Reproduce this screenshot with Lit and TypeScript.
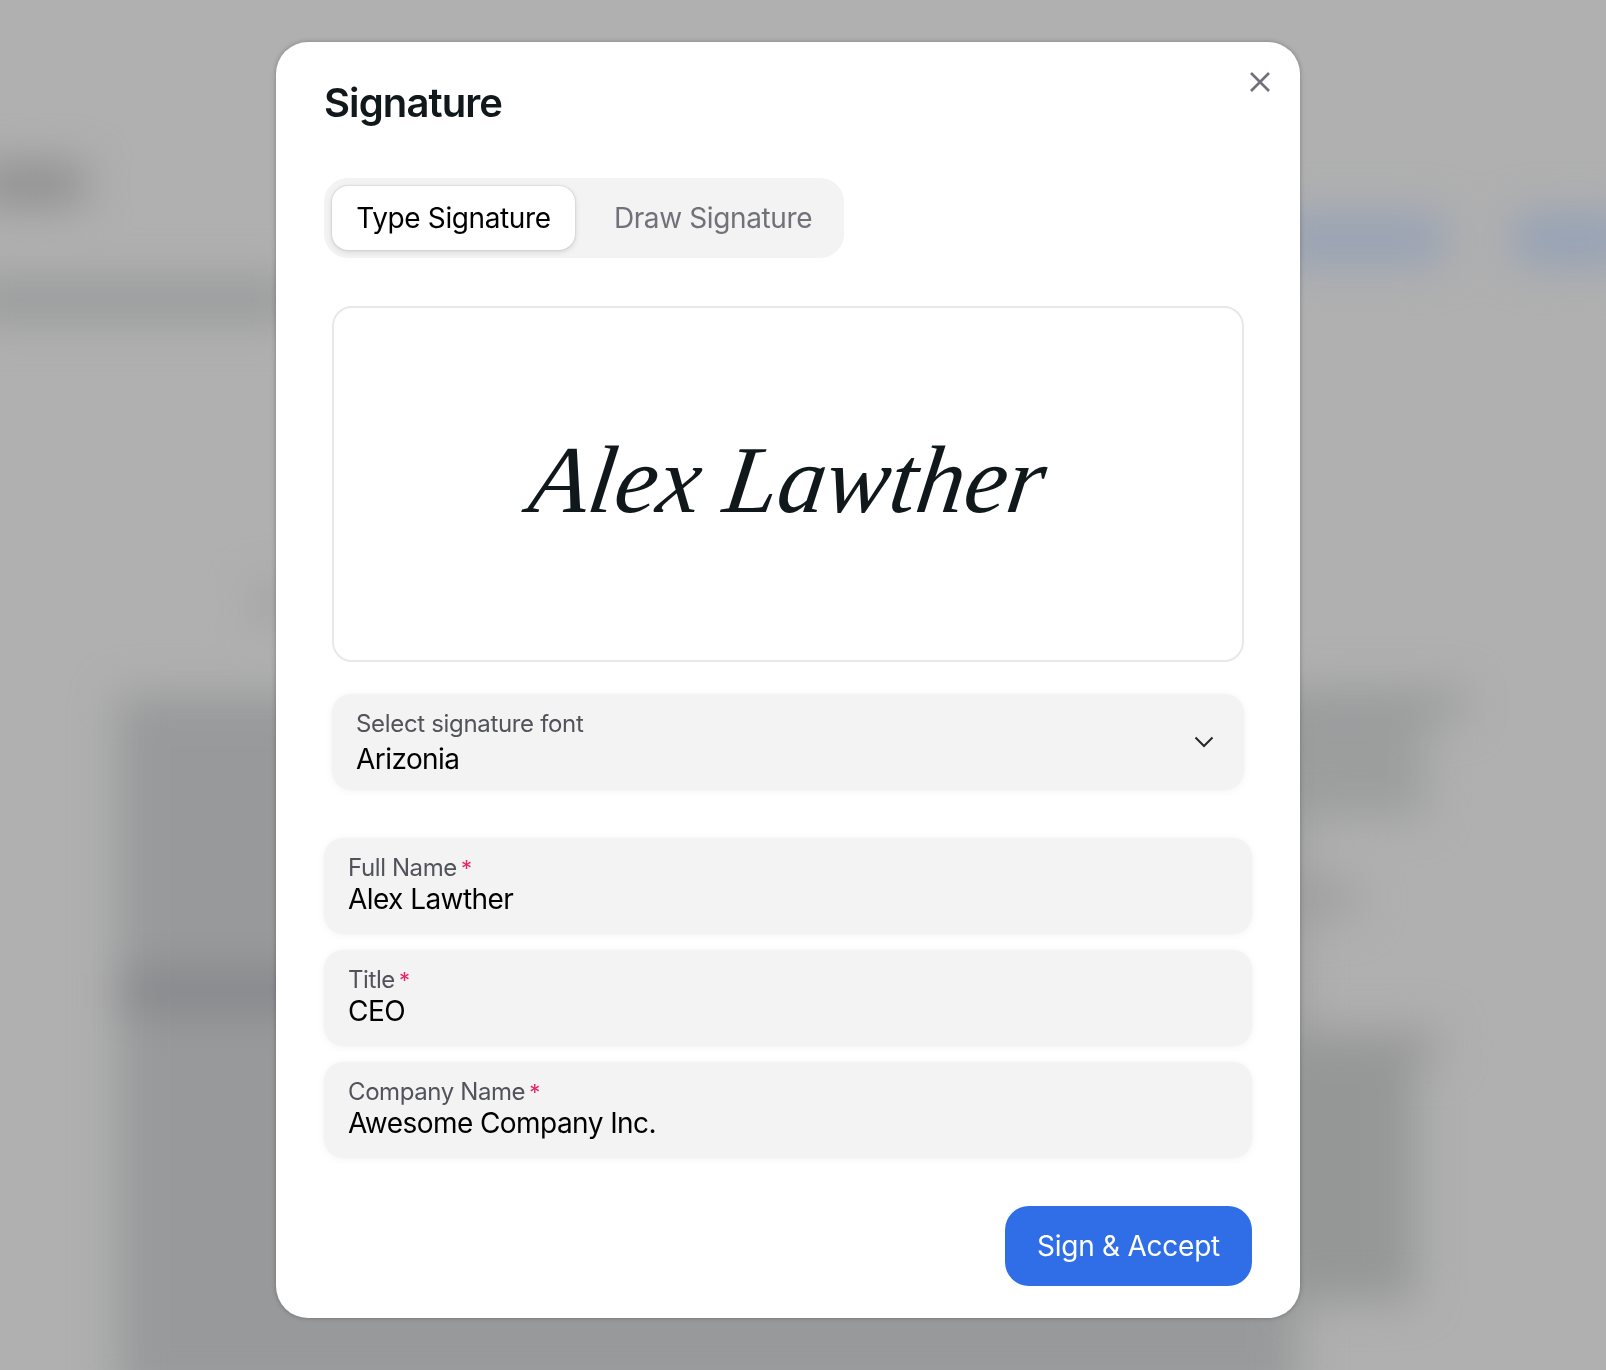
import { LitElement, html, css } from "lit";
import { customElement } from "lit/decorators.js";

@customElement("app-root")
export class AppRoot extends LitElement {
  static styles = css`
    :host { display: block; position: relative; width: 1606px; height: 1370px; overflow: hidden; background: #b0b0b0; font-family: Inter, "Noto Sans", sans-serif; color: #11181c; }
    * { box-sizing: border-box; }
    .backdrop { position: absolute; inset: 0; filter: blur(22px); }
    .backdrop div { position: absolute; }
    .b1 { left: -20px; top: 165px; width: 105px; height: 38px; background: #8b8b8b; }
    .b2 { left: -30px; top: 280px; width: 330px; height: 40px; background: #98999a; }
    .b3 { left: 1270px; top: 214px; width: 175px; height: 50px; background: #97a2b5; }
    .b4 { left: 1515px; top: 214px; width: 120px; height: 50px; background: #94a1b6; }
    .b5 { left: 118px; top: 695px; width: 1180px; height: 705px; background: #98999a; }
    .b6 { left: 118px; top: 972px; width: 200px; height: 38px; background: #85868a; }
    .b7 { left: 1290px; top: 690px; width: 175px; height: 28px; background: #98999a; }
    .b8 { left: 1290px; top: 716px; width: 135px; height: 100px; background: #9c9d9d; }
    .b9 { left: 1290px; top: 880px; width: 66px; height: 36px; background: #9e9e9e; }
    .b10 { left: 1290px; top: 1030px; width: 150px; height: 30px; background: #9a9a9a; }
    .b11 { left: 1290px; top: 1050px; width: 125px; height: 250px; background: #959696; }
    .b12 { left: 255px; top: 585px; width: 40px; height: 36px; background: #a0a0a0; }
    .overlay { position: relative; display: flex; justify-content: center; padding: 42px 30px 0 0; }
    .modal { position: relative; width: 1024px; height: 1276px; padding: 31px 48px 32px; background: #fff; border-radius: 32px; box-shadow: 0 0 5px rgba(0,0,0,.28); display: flex; flex-direction: column; }
    h1 { margin: 0; font-size: 40px; line-height: 60px; font-weight: 600; letter-spacing: -0.9px; }
    .close { position: absolute; top: 20px; right: 20px; width: 40px; height: 40px; padding: 0; border: 0; background: none; display: flex; align-items: center; justify-content: center; color: #71717a; }
    .tabs { margin-top: 45px; align-self: flex-start; display: flex; gap: 16px; padding: 8px; height: 80px; width: 520px; background: #f3f3f4; border-radius: 24px; }
    .tab { width: 244px; height: 64px; display: flex; align-items: center; justify-content: center; font-size: 28px; letter-spacing: -0.38px; color: #71717a; border-radius: 16px; }
    .tab.on { width: 243px; background: #fff; color: #000; box-shadow: 0 2px 6px rgba(0,0,0,.12), 0 0 2px rgba(0,0,0,.2); }
    .inset { margin: 0 8px; }
    .canvas { margin-top: 48px; height: 356px; padding-bottom: 8px; border: 2px solid #e8e8ec; border-radius: 20px; display: flex; align-items: center; justify-content: center; }
    .sig { display: inline-block; font-family: "Liberation Serif", serif; font-style: italic; font-size: 96px; line-height: 1; color: #11181c; white-space: nowrap; transform: skewX(-8deg); }
    .field { background: #f3f3f4; border-radius: 20px; height: 96px; padding: 15px 24px 0; box-shadow: 0 1px 8px rgba(0,0,0,.05), 0 0 2px rgba(0,0,0,.03); }
    .select { margin-top: 32px; padding-top: 14px; display: flex; align-items: flex-start; justify-content: space-between; }
    .label { font-size: 24px; line-height: 30px; letter-spacing: -0.4px; color: #52525b; display: block; }
    .star { color: #e9245f; margin-left: 4px; font-size: 22px; letter-spacing: 0; }
    .value { font-size: 28px; line-height: 32px; letter-spacing: -0.56px; color: #000; display: block; }
    .select .label { line-height: 32px; letter-spacing: -0.33px; }
    .select .value { margin-top: 1px; line-height: 36px; }
    .chev { margin: 28px 6px 0 0; color: #27272a; }
    .fields { margin-top: 48px; display: flex; flex-direction: column; gap: 16px; }
    .foot { margin-top: 48px; display: flex; justify-content: flex-end; }
    .btn { width: 247px; height: 80px; padding: 0; border: 0; border-radius: 24px; background: #2f6ee6; color: #fff; font: 400 28px Inter, sans-serif; letter-spacing: -0.25px; display: flex; align-items: center; justify-content: center; }
  `;

  private field(label: string, value: string) {
    return html`<div class="field">
      <span class="label">${label}<span class="star">*</span></span>
      <span class="value">${value}</span>
    </div>`;
  }

  render() {
    return html`
      <div class="backdrop">
        <div class="b5"></div><div class="b1"></div><div class="b2"></div><div class="b3"></div><div class="b4"></div>
        <div class="b6"></div><div class="b7"></div><div class="b8"></div><div class="b9"></div><div class="b10"></div><div class="b11"></div><div class="b12"></div>
      </div>
      <div class="overlay">
        <section class="modal">
          <button class="close" aria-label="Close">
            <svg width="20" height="20" viewBox="0 0 20 20" fill="none" stroke="currentColor" stroke-width="2.6"><path d="M1 1l18 18M19 1L1 19"/></svg>
          </button>
          <h1>Signature</h1>
          <div class="tabs">
            <div class="tab on">Type Signature</div>
            <div class="tab">Draw Signature</div>
          </div>
          <div class="canvas inset"><span class="sig">Alex Lawther</span></div>
          <div class="field select inset">
            <div>
              <span class="label">Select signature font</span>
              <span class="value">Arizonia</span>
            </div>
            <svg class="chev" width="20" height="12" viewBox="0 0 20 12" fill="none" stroke="currentColor" stroke-width="2"><path d="M1.5 1.5L10 10l8.5-8.5"/></svg>
          </div>
          <div class="fields">
            ${this.field("Full Name", "Alex Lawther")}
            ${this.field("Title", "CEO")}
            ${this.field("Company Name", "Awesome Company Inc.")}
          </div>
          <div class="foot"><button class="btn">Sign &amp; Accept</button></div>
        </section>
      </div>
    `;
  }
}
